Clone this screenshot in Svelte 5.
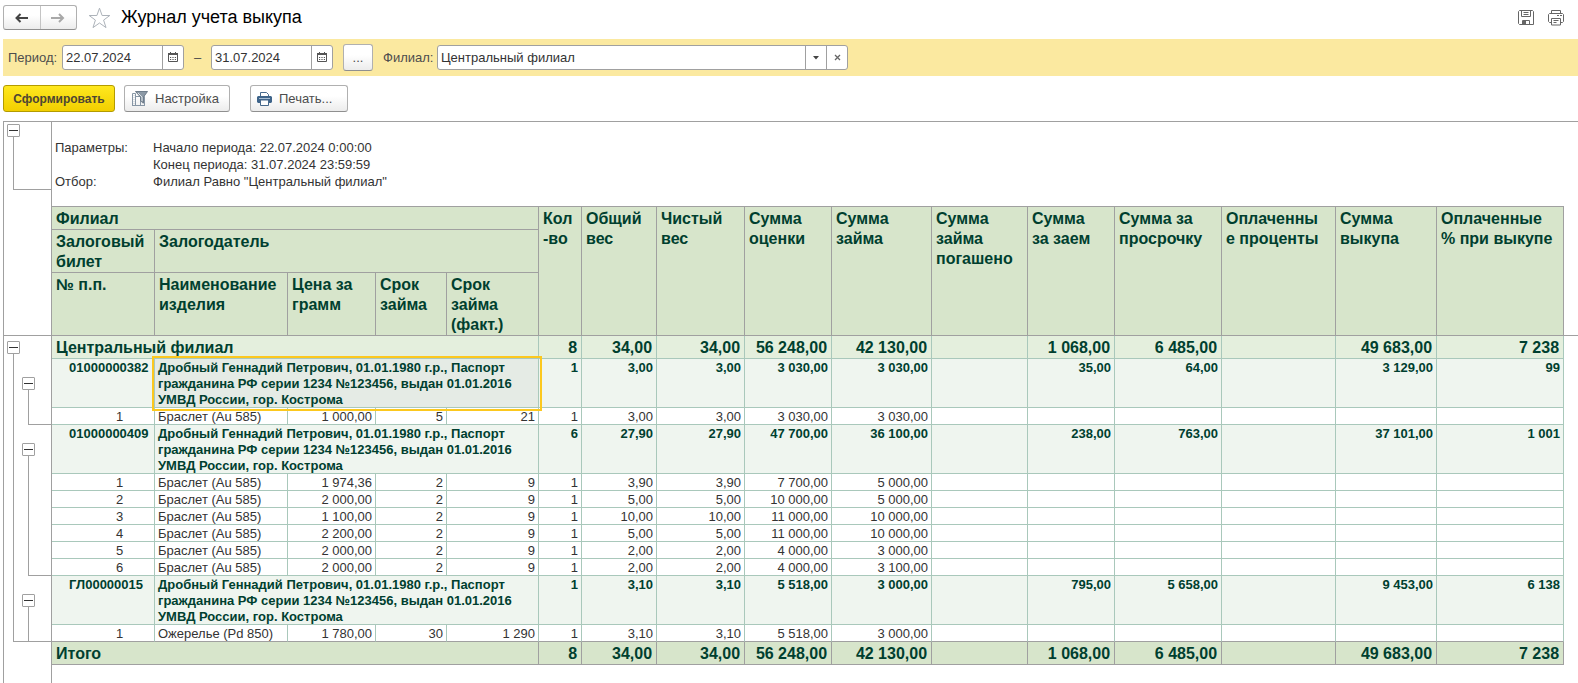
<script lang="ts">
  // Pawn ticket redemption journal: period and branch filter on top,
  // grouped spreadsheet report with collapsible outline below.

  type Row = { no: string; name: string; cells: string[] };
  type Ticket = { no: string; owner: string; totals: string[]; items: Row[] };

  const OWNER =
    'Дробный Геннадий Петрович, 01.01.1980 г.р., Паспорт гражданина РФ серии 1234 №123456, выдан 01.01.2016 УМВД России, гор. Кострома';

  const colWidths = [103, 133, 88, 71, 92, 43, 75, 88, 87, 100, 96, 87, 107, 114, 101, 127];

  const measures = [
    'Кол\n-во',
    'Общий\nвес',
    'Чистый\nвес',
    'Сумма\nоценки',
    'Сумма\nзайма',
    'Сумма\nзайма\nпогашено',
    'Сумма\nза заем',
    'Сумма за\nпросрочку',
    'Оплаченны\nе проценты',
    'Сумма\nвыкупа',
    'Оплаченные\n% при выкупе',
  ];

  const grandTotals = ['8', '34,00', '34,00', '56 248,00', '42 130,00', '', '1 068,00', '6 485,00', '', '49 683,00', '7 238'];

  // price, term, actual term, count, gross, net, appraisal, loan
  const item = (no: number, name: string, ...v: string[]): Row => ({
    no: String(no),
    name,
    cells: [...v, '', '', '', '', '', ''],
  });

  const tickets: Ticket[] = [
    {
      no: '01000000382',
      owner: OWNER,
      totals: ['1', '3,00', '3,00', '3 030,00', '3 030,00', '', '35,00', '64,00', '', '3 129,00', '99'],
      items: [item(1, 'Браслет (Au 585)', '1 000,00', '5', '21', '1', '3,00', '3,00', '3 030,00', '3 030,00')],
    },
    {
      no: '01000000409',
      owner: OWNER,
      totals: ['6', '27,90', '27,90', '47 700,00', '36 100,00', '', '238,00', '763,00', '', '37 101,00', '1 001'],
      items: [
        item(1, 'Браслет (Au 585)', '1 974,36', '2', '9', '1', '3,90', '3,90', '7 700,00', '5 000,00'),
        item(2, 'Браслет (Au 585)', '2 000,00', '2', '9', '1', '5,00', '5,00', '10 000,00', '5 000,00'),
        item(3, 'Браслет (Au 585)', '1 100,00', '2', '9', '1', '10,00', '10,00', '11 000,00', '10 000,00'),
        item(4, 'Браслет (Au 585)', '2 200,00', '2', '9', '1', '5,00', '5,00', '11 000,00', '10 000,00'),
        item(5, 'Браслет (Au 585)', '2 000,00', '2', '9', '1', '2,00', '2,00', '4 000,00', '3 000,00'),
        item(6, 'Браслет (Au 585)', '2 000,00', '2', '9', '1', '2,00', '2,00', '4 000,00', '3 100,00'),
      ],
    },
    {
      no: 'ГЛ00000015',
      owner: OWNER,
      totals: ['1', '3,10', '3,10', '5 518,00', '3 000,00', '', '795,00', '5 658,00', '', '9 453,00', '6 138'],
      items: [item(1, 'Ожерелье (Pd 850)', '1 780,00', '30', '1 290', '1', '3,10', '3,10', '5 518,00', '3 000,00')],
    },
  ];

  const TICKET_H = 49;
  const ITEM_H = 17;

  let dateFrom = $state('22.07.2024');
  let dateTo = $state('31.07.2024');
  let branch = $state('Центральный филиал');
  let selected = $state(0);
  let branchOpen = $state(true);
  let open = $state(tickets.map(() => true));

  const groupHeight = (i: number) => TICKET_H + (open[i] ? ITEM_H * tickets[i].items.length : 0);
  const treeHeight = $derived(5 + tickets.reduce((sum, _, i) => sum + groupHeight(i), 0));
</script>

{#snippet calendar()}
  <svg width="10" height="11" viewBox="0 0 10 11" aria-hidden="true">
    <path d="M0.5 2v7.5h9V2M0 2.500h10" fill="none" stroke="#555" />
    <path d="M2.500 0v3M7.500 0v3M0 1.500h10" stroke="#555" />
    <path d="M2 5.500h6M2 7.500h6" stroke="#555" stroke-dasharray="1.200 1.200" />
  </svg>
{/snippet}

{#snippet cols()}
  <colgroup>
    {#each colWidths as w}
      <col style="width: {w}px" />
    {/each}
  </colgroup>
{/snippet}

<main class="page">
  <header class="title">
    <div class="title__nav">
      <button type="button" aria-label="Назад">
        <svg width="16" height="12" viewBox="0 0 16 12"><path d="M2 6h12M6.5 2L2.500 6l4 4" fill="none" stroke="#444" stroke-width="2" /></svg>
      </button>
      <button type="button" aria-label="Вперед">
        <svg width="16" height="12" viewBox="0 0 16 12"><path d="M1 6h12M9 2l4 4-4 4" fill="none" stroke="#a8a8a8" stroke-width="2" /></svg>
      </button>
    </div>
    <button type="button" class="title__icon title__star" aria-label="В избранное">
      <svg width="23" height="22" viewBox="0 0 23 22">
        <path d="M11.5 1.2l2.6 7.3h7.7l-6.2 4.6 2.4 7.5-6.5-4.6L5 20.6l2.4-7.5L1.2 8.500h7.700z" fill="#fff" stroke="#adb3ba" />
      </svg>
    </button>
    <h1>Журнал учета выкупа</h1>
    <button type="button" class="title__icon" aria-label="Сохранить">
      <svg width="16" height="16" viewBox="0 0 16 16" fill="none" stroke="#666">
        <path d="M1.500 .5h13l1 1v13h-14l-1-1v-12z" />
        <path d="M3.500 .5v6h9v-6M5.500 2.500h5M5.500 4.500h5" />
        <path d="M4.500 14.500v-4h7v4" />
        <path d="M5 11h3v3H5z" fill="#666" stroke="none" />
      </svg>
    </button>
    <button type="button" class="title__icon" aria-label="Печать">
      <svg width="16" height="16" viewBox="0 0 16 16" fill="none" stroke="#666">
        <path d="M3.500 3.500v-3h9v3M3.500 12.500h-2l-1-1v-7l1-1h13l1 1v7l-1 1h-2" />
        <path d="M3.500 8.500h9v6.500h-9zM5.500 10.500h5M5.500 12.500h3M9 5.500h2M12 5.500h2" />
      </svg>
    </button>
  </header>

  <section class="filter">
    <label for="date-from">Период:</label>
    <div class="field field--date">
      <input id="date-from" type="text" bind:value={dateFrom} />
      <button type="button" aria-label="Выбрать начало периода">{@render calendar()}</button>
    </div>
    <span class="filter__dash">–</span>
    <div class="field field--date">
      <input type="text" aria-label="Конец периода" bind:value={dateTo} />
      <button type="button" aria-label="Выбрать конец периода">{@render calendar()}</button>
    </div>
    <button type="button" class="btn filter__more">...</button>
    <label for="branch">Филиал:</label>
    <div class="field field--branch">
      <div class="combo">
        <select id="branch" bind:value={branch}>
          <option>Центральный филиал</option>
        </select>
        <span class="combo__arrow">
          <svg width="6" height="4" viewBox="0 0 6 4"><path d="M0 0h6L3 3.5z" fill="#444" /></svg>
        </span>
      </div>
      <button type="button" aria-label="Очистить" onclick={() => (branch = '')}>
        <svg width="7" height="7" viewBox="0 0 7 7"><path d="M1 1l5 5M6 1L1 6" stroke="#666" stroke-width="1.3" /></svg>
      </button>
    </div>
  </section>

  <div class="actions">
    <button type="button" class="btn btn--primary">Сформировать</button>
    <button type="button" class="btn btn--settings">
      <svg width="17" height="17" viewBox="0 0 17 17" fill="none">
        <path d="M1.500 15.500v-12h3v12zM4.500 15.500v-9h5v9zM9.500 15.500v-9h4v9zM1 15.500h13" stroke="#8796a5" />
        <path d="M3 5v9M12 9v5" stroke="#c3ccd5" stroke-dasharray="1 1" />
        <path d="M4.500 1.500h12L12.500 7v6l-3-2V7z" fill="#8c99a6" stroke="#6f7d8b" />
        <path d="M7 3l4 4v4" stroke="#dfe5ea" />
      </svg>
      Настройка
    </button>
    <button type="button" class="btn btn--print">
      <svg width="15" height="15" viewBox="0 0 15 15">
        <path d="M3.500 5V1.500h6l2 2V5" fill="#fff" stroke="#47698c" />
        <path d="M1 5h13l1 1v5l-1 1h-2V9H3v3H1l-1-1V6z" fill="#3e648a" />
        <path d="M3.500 9v5.500h8V9z" fill="#fff" stroke="#47698c" />
        <path d="M2 7.500h11" stroke="#a7bdd2" />
      </svg>
      Печать...
    </button>
  </div>

  <section class="report">
    <div class="pane pane--head">
      <div class="gutter gutter--head">
        <button type="button" class="toggle" aria-label="Свернуть параметры"></button>
        <div class="stem"></div>
      </div>
      <div>
        <dl class="params">
          <dt>Параметры:</dt>
          <dd>Начало периода: {dateFrom} 0:00:00</dd>
          <dd>Конец периода: {dateTo} 23:59:59</dd>
          <dt>Отбор:</dt>
          <dd>Филиал Равно "Центральный филиал"</dd>
        </dl>
        <table class="head">
          {@render cols()}
          <thead>
            <tr class="h1">
              <th colspan="5">Филиал</th>
              {#each measures as m}
                <th rowspan="3">{m}</th>
              {/each}
            </tr>
            <tr class="h2">
              <th>Залоговый билет</th>
              <th colspan="4">Залогодатель</th>
            </tr>
            <tr class="h3">
              <th>№ п.п.</th>
              <th>Наименование изделия</th>
              <th>Цена за грамм</th>
              <th>Срок займа</th>
              <th>{'Срок\nзайма\n(факт.)'}</th>
            </tr>
          </thead>
        </table>
      </div>
    </div>

    <div class="pane pane--body">
      <div class="gutter">
        <button type="button" class="toggle" aria-label="Свернуть филиал" onclick={() => (branchOpen = !branchOpen)}></button>
        {#if branchOpen}
          <div class="stem" style="height: {treeHeight}px">
            {#each tickets as ticket, i (ticket.no)}
              <div class="group" style="height: {groupHeight(i)}px">
                <button type="button" class="toggle" aria-label="Свернуть {ticket.no}" onclick={() => (open[i] = !open[i])}></button>
                {#if open[i]}<div class="stem"></div>{/if}
              </div>
            {/each}
          </div>
        {/if}
      </div>
      <table>
        {@render cols()}
        <tbody>
          <tr class="branch">
            <th colspan="5">Центральный филиал</th>
            {#each grandTotals as v}<td>{v}</td>{/each}
          </tr>
          {#if branchOpen}
            {#each tickets as ticket, i (ticket.no)}
              <tr class="ticket">
                <th class="ticket__no">{ticket.no}</th>
                <th colspan="4" class="ticket__owner" class:selected={selected === i} onclick={() => (selected = i)}>
                  <div>{ticket.owner}</div>
                </th>
                {#each ticket.totals as v}<td>{v}</td>{/each}
              </tr>
              {#if open[i]}
                {#each ticket.items as row (row.no)}
                  <tr class="item">
                    <td class="item__no">{row.no}</td>
                    <td class="item__name">{row.name}</td>
                    {#each row.cells as v}<td>{v}</td>{/each}
                  </tr>
                {/each}
              {/if}
            {/each}
          {/if}
        </tbody>
        <tfoot>
          <tr class="total">
            <th colspan="5">Итого</th>
            {#each grandTotals as v}<td>{v}</td>{/each}
          </tr>
        </tfoot>
      </table>
    </div>
  </section>
</main>

<style>
  :global(body) {
    background: #fff;
  }

  .page {
    --line: #a0a0a0;
    --grid: #a9c8bb;
    --green: #003f2f;
    display: flex;
    flex-direction: column;
    min-height: 100vh;
    padding-left: 3px;
    box-sizing: border-box;
    font-family: 'Liberation Sans', Arial, sans-serif;
    font-size: 13px;
    color: #333;
  }

  button,
  input,
  select {
    font: inherit;
    color: inherit;
    box-sizing: border-box;
  }

  button {
    display: flex;
    align-items: center;
    justify-content: center;
    padding: 0;
    border: 0;
    background: none;
  }

  svg {
    display: block;
    flex: none;
  }

  /* title bar */
  .title {
    display: flex;
    align-items: center;
    height: 39px;
    padding: 0 14px 4px 0;
    box-sizing: border-box;
  }
  .title h1 {
    flex: 1;
    margin: 0;
    font-size: 18px;
    font-weight: 400;
    color: #000;
  }
  .title__nav {
    display: flex;
    width: 74px;
    height: 25px;
    border: 1px solid #b0b0b0;
    border-bottom-color: #8f8f8f;
    border-radius: 3px;
    box-sizing: border-box;
    background: linear-gradient(#fff 40%, #ececec);
  }
  .title__nav button {
    flex: 1;
  }
  .title__nav button + button {
    border-left: 1px solid #c4c4c4;
  }
  .title__star {
    margin: 0 10px 0 11px;
  }
  .title__icon + .title__icon {
    margin-left: 14px;
  }

  /* filter bar */
  .filter {
    display: flex;
    align-items: center;
    height: 37px;
    padding-left: 5px;
    background: #fbe9a0;
    color: #4d4d4d;
  }
  .filter__dash {
    width: 27px;
    text-align: center;
  }
  .filter__more {
    width: 30px;
    margin: 0 10px;
  }
  .filter label {
    width: 54px;
  }
  .field {
    display: flex;
    height: 25px;
    box-sizing: border-box;
    border: 1px solid var(--line);
    border-radius: 3px;
    background: #fff;
    color: #333;
  }
  .field--date {
    width: 122px;
  }
  .field--branch {
    width: 411px;
  }
  .field input,
  .field select {
    flex: 1;
    min-width: 0;
    padding: 0 3px;
    border: 0;
    outline: 0;
    background: none;
    appearance: none;
  }
  .field button {
    width: 21px;
    border-left: 1px solid var(--line);
  }
  .combo {
    display: grid;
    flex: 1;
  }
  .combo select,
  .combo__arrow {
    grid-area: 1 / 1;
  }
  .combo__arrow {
    display: flex;
    align-items: center;
    justify-content: center;
    justify-self: end;
    width: 21px;
    box-sizing: border-box;
    border-left: 1px solid var(--line);
    pointer-events: none;
  }

  /* command buttons */
  .actions {
    display: flex;
    padding: 9px 0;
  }
  .btn {
    height: 27px;
    gap: 7px;
    border: 1px solid #b0b0b0;
    border-bottom-color: #8f8f8f;
    border-radius: 3px;
    background: linear-gradient(#fff 40%, #ececec);
    color: #4d4d4d;
  }
  .btn--primary {
    width: 112px;
    margin-right: 9px;
    border-color: #b39b00;
    background: linear-gradient(#ffe81f, #f2cf00);
    font-size: 12px;
    font-weight: 700;
    color: #4d4633;
  }
  .btn--settings,
  .btn--print {
    justify-content: flex-start;
    padding-left: 6px;
  }
  .btn--settings {
    width: 106px;
    margin-right: 20px;
  }
  .btn--print {
    width: 98px;
  }

  /* report */
  .report {
    display: flex;
    flex: 1;
    flex-direction: column;
    border: 1px solid var(--line);
    border-width: 1px 0 0 1px;
  }
  .pane {
    display: flex;
  }
  .pane--head {
    border-bottom: 1px solid var(--line);
  }
  .pane--body {
    flex: 1;
  }

  .gutter {
    flex: none;
    width: 48px;
    padding: 5px 0 0 3px;
    box-sizing: border-box;
    border-right: 1px solid var(--line);
  }
  .gutter--head {
    padding-top: 2px;
  }
  .gutter--head .stem {
    height: 53px;
  }
  .toggle {
    flex: none;
    width: 13px;
    height: 13px;
    border: 1px solid var(--line);
    border-radius: 1px;
    background: #fff;
  }
  .toggle::before {
    content: '';
    width: 9px;
    height: 1px;
    background: #333;
  }
  .stem {
    margin-left: 6px;
    padding: 5px 0 0 8px;
    box-sizing: border-box;
    border: 1px solid var(--line);
    border-width: 0 0 1px 1px;
  }
  .group {
    display: flex;
    flex-direction: column;
    padding-top: 18px;
    box-sizing: border-box;
  }
  .group .stem {
    flex: 1;
  }

  .params {
    display: grid;
    grid-template-columns: 98px auto;
    margin: 0;
    padding: 17px 0 16px 3px;
    line-height: 17px;
  }
  .params dt {
    grid-column: 1;
  }
  .params dd {
    grid-column: 2;
    margin: 0;
  }

  table {
    align-self: flex-start;
    width: 1512px;
    table-layout: fixed;
    border-collapse: separate;
    border-spacing: 0;
  }
  th,
  td {
    padding: 1px 3px 0 2px;
    border: 0 solid var(--grid);
    border-width: 0 1px 1px 0;
    line-height: 15px;
    text-align: right;
    vertical-align: top;
    white-space: nowrap;
  }
  th {
    text-align: left;
  }

  .head {
    border-top: 1px solid var(--line);
  }
  .head th {
    padding: 2px 4px 0;
    border-color: var(--line);
    background: #d7e5cb;
    font-size: 16px;
    line-height: 20px;
    color: var(--green);
    white-space: pre-line;
  }
  .head th[rowspan],
  .head .h3 th {
    border-bottom: 0;
  }
  .h1 {
    height: 23px;
  }
  .h2 {
    height: 43px;
  }
  .h3 {
    height: 62px;
  }

  .branch > *,
  .total > * {
    padding: 2px 4px 0;
    background: #e4efdd;
    font-size: 16px;
    font-weight: 700;
    line-height: 20px;
    color: var(--green);
  }
  .total > * {
    border-color: var(--line);
    background: #d7e5cb;
  }
  .ticket > * {
    background: #eff5ef;
    font-weight: 700;
    line-height: 16px;
    color: var(--green);
  }
  .ticket .ticket__no {
    padding-left: 17px;
  }
  .ticket .ticket__owner {
    padding: 1px 16px 0 3px;
    white-space: normal;
  }
  /* the last line shares its bottom pixel with the row border */
  .ticket__owner div {
    margin-bottom: -1px;
  }
  .ticket .selected {
    position: relative;
    background: #e5ebe5;
    outline: 2px solid #fcc81e;
    outline-offset: 1px;
  }
  .item .item__no {
    padding: 1px 0 0 33px;
    text-align: center;
  }
  .item .item__name {
    padding-left: 3px;
    text-align: left;
  }
  tbody tr:last-child > * {
    border-bottom-color: var(--line);
  }
</style>
